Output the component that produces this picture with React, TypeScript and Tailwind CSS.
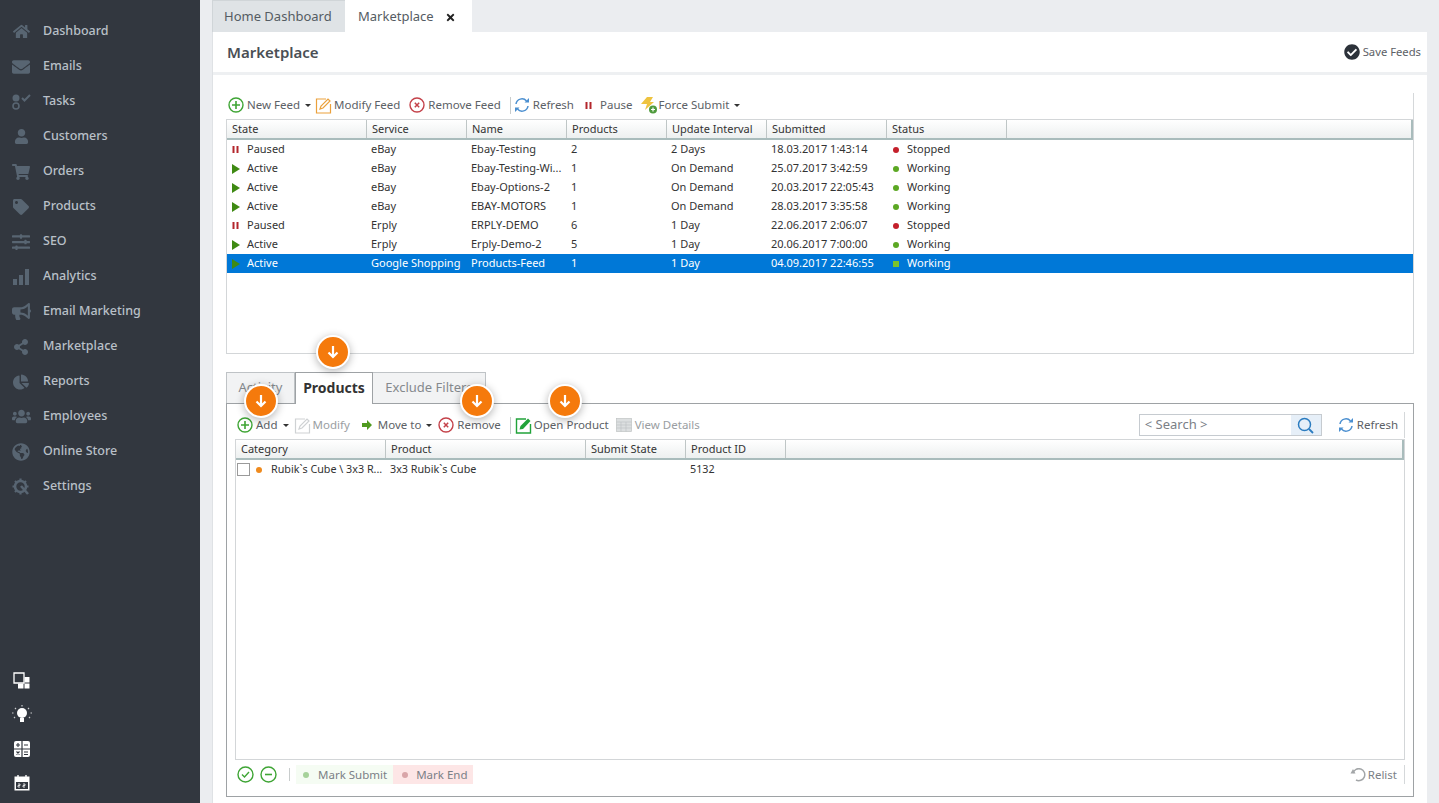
import React from "react";
import { FaHome, FaEnvelope, FaUser, FaShoppingCart, FaTag, FaSlidersH, FaBullhorn, FaShareAlt, FaChartPie, FaUsers, FaGlobeAmericas, FaCheckCircle, FaTimes } from "react-icons/fa";

const Tasks = () => (
  <svg width="20" height="18" viewBox="0 0 20 18" fill="none">
    <circle cx="5" cy="5" r="3.5" fill="#586572" />
    <circle cx="5" cy="13" r="3" stroke="#586572" strokeWidth="1.6" />
    <path d="M11 5l2.5 2.5L19 2" stroke="#586572" strokeWidth="2" />
  </svg>
);
const Bars = () => (
  <svg width="18" height="18" viewBox="0 0 18 18" fill="#586572">
    <rect x="1" y="11" width="4" height="6" />
    <rect x="7" y="7" width="4" height="10" />
    <rect x="13" y="1" width="4" height="16" />
  </svg>
);
const Gear = () => (
  <svg width="18" height="18" viewBox="0 0 18 18" fill="none">
    <circle cx="8.500" cy="8.500" r="5.500" stroke="#586572" strokeWidth="2.600" />
    <path d="M8.500 0.500v2M8.500 14.500v2M0.500 8.500h2M14.500 8.500h2M3 3l1.500 1.500M14 3l-1.500 1.500M3 14l1.500-1.500" stroke="#586572" strokeWidth="2.200" />
    <path d="M9 8l7 8" stroke="#586572" strokeWidth="2.600" />
  </svg>
);

const nav: [string, React.ReactNode][] = [
  ["Dashboard", <FaHome size={17} />],
  ["Emails", <FaEnvelope size={18} />],
  ["Tasks", <Tasks />],
  ["Customers", <FaUser size={15} />],
  ["Orders", <FaShoppingCart size={18} />],
  ["Products", <FaTag size={16} />],
  ["SEO", <FaSlidersH size={18} />],
  ["Analytics", <Bars />],
  ["Email Marketing", <FaBullhorn size={19} />],
  ["Marketplace", <FaShareAlt size={16} />],
  ["Reports", <FaChartPie size={16} />],
  ["Employees", <FaUsers size={19} />],
  ["Online Store", <FaGlobeAmericas size={18} />],
  ["Settings", <Gear />],
];

const PlusIcon = () => (
  <svg width="16" height="16" viewBox="0 0 16 16" fill="none">
    <circle cx="8" cy="8" r="7" stroke="#3fa535" strokeWidth="1.4" />
    <path d="M8 4v8M4 8h8" stroke="#3fa535" strokeWidth="1.6" />
  </svg>
);
const RemoveIcon = () => (
  <svg width="16" height="16" viewBox="0 0 16 16" fill="none">
    <circle cx="8" cy="8" r="7" stroke="#c4424a" strokeWidth="1.4" />
    <path d="M5.800 5.800l4.400 4.400M10.200 5.800l-4.400 4.400" stroke="#c4424a" strokeWidth="1.500" />
  </svg>
);
const EditIcon = ({ box, pen }: { box: string; pen: string }) => (
  <svg width="17" height="17" viewBox="0 0 17 17" fill="none">
    <path d="M11 2H1.500v14h14V7" stroke={box} strokeWidth="1.200" />
    <path d="M5 12l1-3 7-7 2 2-7 7z" stroke={pen} strokeWidth="1.200" />
  </svg>
);
const OpenIcon = () => (
  <svg width="17" height="17" viewBox="0 0 17 17" fill="none">
    <path d="M11 2H1.500v14h14V7" stroke="#21a33a" strokeWidth="1.400" />
    <path d="M4.500 12.500l1-3.500 7.500-7.500 2.500 2.500L8 12z" fill="#21a33a" />
  </svg>
);
const RefreshIcon = () => (
  <svg width="16" height="16" viewBox="0 0 16 16" fill="none">
    <path d="M2 7a6 6 0 0 1 10.500-3" stroke="#4b8fd0" strokeWidth="1.500" />
    <path d="M14 9a6 6 0 0 1-10.500 3" stroke="#4b8fd0" strokeWidth="1.500" />
    <path d="M10.500 5.500H15V1zM5.500 10.500H1V15z" fill="#4b8fd0" />
  </svg>
);
const PauseIcon = () => (
  <svg width="7" height="7" viewBox="0 0 7 7" fill="#b3262c">
    <rect x="0.500" y="0" width="2" height="7" />
    <rect x="4.500" y="0" width="2" height="7" />
  </svg>
);
const PlayIcon = () => (
  <svg width="8" height="10" viewBox="0 0 8 10" fill="#3f8a13">
    <path d="M0 0l8 5-8 5z" />
  </svg>
);
const BoltIcon = () => (
  <svg width="18" height="17" viewBox="0 0 18 17">
    <path d="M7 0h6l-3 5h4L5 13l2-6H1z" fill="#eec33f" />
    <circle cx="13" cy="12.500" r="4" fill="#4f9b3d" />
    <path d="M13 10.500v4M11 12.500h4" stroke="#fff" strokeWidth="1.200" />
  </svg>
);
const Caret = () => <span className="ml-[5px] mt-[1px] h-0 w-0 border-x-[3px] border-t-[3px] border-x-transparent border-t-[#333]" />;

const Btn = ({ icon, label, grey, ml, gap = 3 }: { icon: React.ReactNode; label: string; grey?: boolean; ml?: string; gap?: number }) => (
  <span className={`flex items-center whitespace-nowrap ${ml ?? ""} ${grey ? "text-[#9a9ea2]" : "text-[#5c6166]"}`}>
    <span className="flex items-center" style={{ marginRight: gap }}>{icon}</span>
    {label}
  </span>
);

type Col = { t: string; w: number };
const HeaderRow = ({ cols }: { cols: Col[] }) => (
  <div className="flex h-5 shrink-0 border-b-2 border-[#a9bcbc] bg-linear-to-b from-white to-[#edf0f0] text-[11px] text-[#333]">
    {cols.map((c) => (
      <div key={c.t} className="flex items-center border-r border-[#bfc6c6] pl-[5px]" style={{ width: c.w }}>{c.t}</div>
    ))}
    <div className="flex-1 border-r-2 border-[#a9bcbc]" />
  </div>
);

const feedCols: Col[] = [
  { t: "State", w: 140 }, { t: "Service", w: 100 }, { t: "Name", w: 100 }, { t: "Products", w: 100 },
  { t: "Update Interval", w: 100 }, { t: "Submitted", w: 120 }, { t: "Status", w: 120 },
];
const feeds = [
  ["Paused", "eBay", "Ebay-Testing", "2", "2 Days", "18.03.2017 1:43:14", "Stopped"],
  ["Active", "eBay", "Ebay-Testing-Wi...", "1", "On Demand", "25.07.2017 3:42:59", "Working"],
  ["Active", "eBay", "Ebay-Options-2", "1", "On Demand", "20.03.2017 22:05:43", "Working"],
  ["Active", "eBay", "EBAY-MOTORS", "1", "On Demand", "28.03.2017 3:35:58", "Working"],
  ["Paused", "Erply", "ERPLY-DEMO", "6", "1 Day", "22.06.2017 2:06:07", "Stopped"],
  ["Active", "Erply", "Erply-Demo-2", "5", "1 Day", "20.06.2017 7:00:00", "Working"],
  ["Active", "Google Shopping", "Products-Feed", "1", "1 Day", "04.09.2017 22:46:55", "Working"],
];

const Badge = ({ cls }: { cls: string }) => (
  <div className={`absolute z-10 flex h-[34px] w-[34px] items-center justify-center rounded-full border-2 border-white bg-[#f57a0c] shadow-[0_2px_8px_rgba(0,0,0,0.3)] ${cls}`}>
    <svg width="14" height="14" viewBox="0 0 14 14" fill="none">
      <path d="M7 1v11M2.500 7.500L7 12l4.500-4.500" stroke="#fff" strokeWidth="2.200" />
    </svg>
  </div>
);

const Ext = [
  <svg key="a" width="18" height="18" viewBox="0 0 18 18" fill="#fff"><path d="M1 1h10v10H1z" fill="none" stroke="#fff" strokeWidth="1.300" /><rect x="11.500" y="5" width="5" height="5.500" /><rect x="5" y="11.500" width="5.500" height="5" /><rect x="11.500" y="11.500" width="5" height="5" /></svg>,
  <svg key="b" width="20" height="20" viewBox="0 0 20 20" fill="#fff"><circle cx="10" cy="8" r="5" /><rect x="8" y="13" width="4" height="4" /><path d="M10 0v1.500M3 3l1 1M17 3l-1 1M0 8h1.500M20 8h-1.500M2 13l1-1M18 13l-1-1" stroke="#c9cbcd" strokeWidth="1.200" /></svg>,
  <svg key="c" width="18" height="18" viewBox="0 0 18 18"><rect x="1" y="1" width="16" height="16" rx="2" fill="#fff" /><path d="M9 1v16M1 9h16" stroke="#32373f" strokeWidth="1.200" /><path d="M3 5h4M5 3v4M11 5h4M11 12h4M11 14.500h4M3.500 11.500l3 3M6.500 11.500l-3 3" stroke="#32373f" strokeWidth="1.100" /></svg>,
  <svg key="d" width="18" height="18" viewBox="0 0 18 18"><rect x="1.500" y="2.500" width="15" height="14" fill="#fff" /><rect x="3" y="8" width="12" height="7" fill="#32373f" /><path d="M5 1v3M13 1v3" stroke="#fff" strokeWidth="1.400" /><path d="M5 10h2v1.500H5V13h2M10 10h2v1.500h-2V13h2" stroke="#fff" strokeWidth="0.800" fill="none" /></svg>,
];

export default function App() {
  return (
    <div className="flex h-screen overflow-hidden bg-[#ebedf0] font-['Open_Sans','Noto_Sans',sans-serif]">
      <aside className="flex w-[200px] shrink-0 flex-col justify-between bg-[#32373f] pt-[14px] pb-[3px]">
        <nav className="flex flex-col">
          {nav.map(([t, i]) => (
            <div key={t} className="flex h-[35px] items-center">
              <span className="flex w-[43px] justify-center pr-[1px] text-[#586572]"><span className="flex w-[20px] justify-center">{i}</span></span>
              <span className="text-[12.5px] font-medium text-[#b9c0c8]">{t}</span>
            </div>
          ))}
        </nav>
        <div className="flex flex-col">
          {Ext.map((e, i) => (
            <div key={i} className="flex h-[34px] w-[43px] items-center justify-center">{e}</div>
          ))}
        </div>
      </aside>

      <main className="ml-3 flex w-[1215px] shrink-0 flex-col">
        <div className="flex h-8 shrink-0 text-[13px] text-[#555c63]">
          <div className="flex w-[133px] items-center border-t border-l border-[#d0d5d8] bg-[#dfe3e6] pl-[11px]">Home Dashboard</div>
          <div className="flex w-[127px] items-center bg-white pl-[13px] pt-[1px]">
            <span>Marketplace</span>
            <FaTimes size={11} className="ml-[11px] mt-[2px] text-[#222]" />
          </div>
        </div>

        <div className="flex min-h-0 flex-1 flex-col border-l border-[#dfe2e5] bg-white">
          <div className="flex h-[43px] shrink-0 items-center justify-between border-b-[3px] border-[#eef0f2] pl-[14px] pr-[6px]">
            <h1 className="text-[15px] font-semibold text-[#4a4f55]">Marketplace</h1>
            <span className="flex items-center text-[11.250px] text-[#5c6166]">
              <FaCheckCircle size={16} className="mr-[3px] text-[#2c323a]" />Save Feeds
            </span>
          </div>

          <div className="flex flex-1 flex-col px-[13px] pt-[18px]">
            <div className="flex h-[26px] shrink-0 items-center border-r border-[#d5d8da] pb-[2px] pl-[2px] text-[11.500px]">
              <Btn icon={<PlusIcon />} label="New Feed" />
              <Caret />
              <Btn ml="ml-[4px]" icon={<EditIcon box="#eba13c" pen="#eba13c" />} label="Modify Feed" gap={2} />
              <Btn ml="ml-[9px]" icon={<RemoveIcon />} label="Remove Feed" gap={3} />
              <span className="ml-[9px] mr-[3px] h-[17px] w-px bg-[#c8cccc]" />
              <Btn icon={<RefreshIcon />} label="Refresh" gap={3} />
              <Btn ml="ml-[11px]" icon={<PauseIcon />} label="Pause" gap={8} />
              <Btn ml="ml-[7px]" icon={<BoltIcon />} label="Force Submit" gap={1} />
              <Caret />
            </div>

            <div className="flex h-[235px] shrink-0 flex-col border border-[#d3d6d8]">
              <HeaderRow cols={feedCols} />
              {feeds.map((r, i) => {
                const sel = i === 6;
                return (
                  <div key={i} className={`flex h-[19px] shrink-0 items-center text-[11px] ${sel ? "bg-[#0078d7] text-white" : "text-[#333]"}`}>
                    <div className="flex w-[140px] items-center pl-[5px]">
                      <span className="flex w-[15px]">{r[0] === "Paused" ? <PauseIcon /> : <PlayIcon />}</span>{r[0]}
                    </div>
                    {r.slice(1, 6).map((c, j) => (
                      <div key={j} className="whitespace-nowrap pl-[4px]" style={{ width: feedCols[j + 1].w }}>{c}</div>
                    ))}
                    <div className="flex items-center pl-[6px]">
                      {sel ? <span className="mr-[8px] h-[6px] w-[6px] bg-[#7cc22b]" /> : <span className={`mr-[8px] h-[6px] w-[6px] rounded-full ${r[6] === "Stopped" ? "bg-[#c4202b]" : "bg-[#5ca823]"}`} />}
                      {r[6]}
                    </div>
                  </div>
                );
              })}
            </div>

            <div className="relative mt-[18px] flex h-[31px] shrink-0 items-end text-[13px]">
              <div className="flex h-[31px] w-[69px] items-center justify-center border border-b-0 border-[#bfc3c6] bg-[#f2f3f4] pb-[1px] text-[#85898d]">Activity</div>
              <div className="z-[1] -mb-px flex h-[32px] w-[78px] items-center justify-center border border-b-0 border-[#9ea2a5] bg-white pb-[2px] text-[14px] font-bold text-[#333]">Products</div>
              <div className="flex h-[31px] w-[113px] items-center justify-center border border-b-0 border-l-0 border-[#bfc3c6] bg-[#f2f3f4] pb-[1px] text-[#85898d]">Exclude Filters</div>
              <Badge cls="left-[90px] -top-[37px]" />
              <Badge cls="left-[18px] top-[12px]" />
              <Badge cls="left-[234px] top-[12px]" />
              <Badge cls="left-[322px] top-[12px]" />
            </div>

            <div className="flex h-[394px] shrink-0 flex-col border border-[#9ea2a5] px-2 pt-[8px]">
              <div className="flex h-[26px] shrink-0 items-center border-r border-[#d5d8da] pl-[2px] text-[11.500px]">
                <Btn icon={<PlusIcon />} label="Add" gap={3} />
                <Caret />
                <Btn ml="ml-[5px]" grey icon={<EditIcon box="#cfd2d4" pen="#cfd2d4" />} label="Modify" gap={2} />
                <Btn ml="ml-[12px]" icon={<svg width="10" height="10" viewBox="0 0 10 10" fill="#4f9a1f"><path d="M0 3h5V0l5 5-5 5V7H0z" /></svg>} label="Move to" gap={6} />
                <Caret />
                <Btn ml="ml-[6px]" icon={<RemoveIcon />} label="Remove" gap={3} />
                <span className="ml-[9px] mr-[4px] h-[17px] w-px bg-[#c8cccc]" />
                <Btn icon={<OpenIcon />} label="Open Product" gap={2} />
                <Btn ml="ml-[7px]" grey icon={<svg width="16" height="14" viewBox="0 0 16 14" fill="#dcdfe0" stroke="#bfc3c4" strokeWidth="0.700"><rect x="0.500" y="0.500" width="15" height="13" /><path d="M0.500 4h15M0.500 7h15M0.500 10h15M5 4v9.500M10 4v9.500" fill="none" /></svg>} label="View Details" gap={3} />
                <div className="ml-auto flex items-center">
                  <div className="flex h-[22px] w-[183px] items-center justify-between border border-[#c6cbd0] pl-[5px] text-[13px] text-[#7b8086]">
                    <span>&lt; Search &gt;</span>
                    <span className="flex h-full w-[30px] items-center justify-center bg-[#e6eff8]">
                      <svg width="17" height="17" viewBox="0 0 17 17" fill="none"><circle cx="7.500" cy="7.500" r="6" stroke="#2b7cc0" strokeWidth="1.500" /><path d="M12 12l4 4" stroke="#2b7cc0" strokeWidth="1.800" /></svg>
                    </span>
                  </div>
                  <Btn ml="ml-[16px]" icon={<RefreshIcon />} label="Refresh" gap={3} />
                  <span className="w-[6px]" />
                </div>
              </div>

              <div className="mt-[1px] flex h-[321px] shrink-0 flex-col border border-[#d3d6d8]">
                <HeaderRow cols={[{ t: "Category", w: 150 }, { t: "Product", w: 200 }, { t: "Submit State", w: 100 }, { t: "Product ID", w: 100 }]} />
                <div className="flex h-[19px] items-center text-[10.750px] text-[#333]">
                  <div className="flex w-[150px] items-center whitespace-nowrap pl-[1px]">
                    <span className="mr-[6px] h-[13px] w-[13px] shrink-0 border border-[#9a9a9a]" />
                    <span className="mr-[9px] h-[6px] w-[6px] shrink-0 rounded-full bg-[#ef8a1d]" />
                    Rubik`s Cube \ 3x3 R...
                  </div>
                  <div className="w-[200px] pl-[4px]">3x3 Rubik`s Cube</div>
                  <div className="w-[100px]" />
                  <div className="w-[100px] pl-[4px]">5132</div>
                </div>
              </div>

              <div className="flex flex-1 items-start pt-[5px] text-[11.500px] text-[#7b8086]">
                <div className="flex h-[19px] flex-1 items-center">
                  <svg className="ml-[2px]" width="17" height="17" viewBox="0 0 17 17" fill="none"><circle cx="8.500" cy="8.500" r="7.500" stroke="#3fa535" strokeWidth="1.400" /><path d="M5 8.500l2.500 2.500L12 6" stroke="#3fa535" strokeWidth="1.400" /></svg>
                  <svg className="ml-[6px]" width="17" height="17" viewBox="0 0 17 17" fill="none"><circle cx="8.500" cy="8.500" r="7.500" stroke="#3fa535" strokeWidth="1.400" /><path d="M5 8.500h7" stroke="#3fa535" strokeWidth="1.600" /></svg>
                  <span className="ml-[12px] h-[13px] w-px bg-[#c8cccc]" />
                  <span className="ml-[6px] flex h-[19px] items-center bg-[#f5fcf3] pl-[7px] pr-[6px]"><span className="mr-[9px] h-[6px] w-[6px] rounded-full bg-[#a6d29a]" />Mark Submit</span>
                  <span className="flex h-[19px] items-center bg-[#fde6e6] pl-[9px] pr-[6px]"><span className="mr-[8px] h-[6px] w-[6px] rounded-full bg-[#d9a5a8]" />Mark End</span>
                </div>
                <div className="flex h-[19px] items-center border-r border-[#d5d8da] pr-[7px]">
                  <svg className="mr-[2px]" width="16" height="14" viewBox="0 0 16 14" fill="none"><path d="M3 5a6 6 0 1 1 3 7" stroke="#a3a6a8" strokeWidth="1.500" /><path d="M0.500 5.500h5L3 1z" fill="#a3a6a8" /></svg>
                  Relist
                </div>
              </div>
            </div>
          </div>
        </div>
      </main>
    </div>
  );
}
